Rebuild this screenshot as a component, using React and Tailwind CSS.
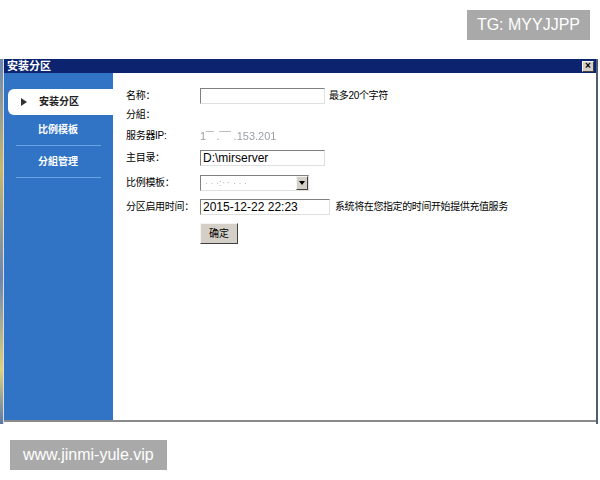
import React from "react";

const cjk = { fontFamily: '"Liberation Sans", "Noto Sans CJK SC", sans-serif' };

function Row({ label, top, children }) {
  return (
    <div className={`flex items-center h-[16px] ${top}`}>
      <div className="w-[74px] whitespace-nowrap text-[10px] tracking-[-0.3px] text-black leading-none">{label}</div>
      {children}
    </div>
  );
}

const sunken = "border border-[#7f7f7f] border-r-[#e0e0e0] border-b-[#e0e0e0]";
const raised = "bg-[#d4d0c8] border border-[#f4f4f4] border-r-[#404040] border-b-[#404040]";

export default function App() {
  return (
    <div className="relative w-[600px] h-[480px] bg-white overflow-hidden" style={cjk}>
      {/* watermarks */}
      <div className="absolute right-[10px] top-[10px] h-[30px] px-[10px] bg-[#a9a9a9] text-white text-[16px] leading-[30px]">
        TG: MYYJJPP
      </div>
      <div className="absolute left-[10px] top-[440px] h-[30px] px-[13px] bg-[#a9a9a9] text-white text-[16px] leading-[30px]">
        www.jinmi-yule.vip
      </div>

      {/* window */}
      <div className="pt-[59px] flex">
        <div className="w-[3px] h-[365px] bg-[linear-gradient(#6b87b5,#c9b86a_30%,#6e86ad_60%,#e0d27a_85%,#5a78a8)]" />
        <div className="w-[595px] border-r-2 border-r-[#4e5f74] border-l border-l-[#d8dde6]">
          <div className="h-[14px] bg-[#0c2470] flex items-center justify-between pl-[3px] pr-[2px]">
            <span className="text-white text-[11px] font-bold leading-none">安装分区</span>
            <span className={`w-[12px] h-[11px] ${raised} flex items-center justify-center text-[10px] font-bold leading-none text-black`}>
              ×
            </span>
          </div>
          <div className="flex h-[349px] border-b-2 border-b-[#8a8a8a]">
            {/* sidebar */}
            <div className="w-[109px] bg-[#3174c6] pt-[16px] flex flex-col">
              <div className="ml-[4px] h-[26px] bg-white rounded-l-[6px] flex items-center pl-[13px]">
                <svg width="6" height="8" viewBox="0 0 6 8">
                  <path d="M0 0 L6 4 L0 8 Z" fill="#333" />
                </svg>
                <span className="ml-[12px] text-[10px] font-bold text-[#222] leading-none">安装分区</span>
              </div>
              <div className="h-[30px] flex items-center pl-[34px] text-white text-[10px] font-bold leading-none">比例模板</div>
              <div className="mx-[12px] h-px bg-[#6aa3e6]" />
              <div className="h-[31px] flex items-center pl-[34px] text-white text-[10px] font-bold leading-none">分組管理</div>
              <div className="mx-[12px] h-px bg-[#6aa3e6]" />
            </div>

            {/* form */}
            <div className="flex-1 bg-white pl-[13px] pt-[15px]">
              <Row label="名称：" top="">
                <div className={`w-[125px] h-[16px] ${sunken}`} />
                <span className="ml-[4px] text-[10px] tracking-[-0.3px] leading-none">最多20个字符</span>
              </Row>
              <Row label="分組：" top="mt-[3px]" />
              <Row label="服务器IP:" top="mt-[5px]">
                <span className="text-[11px] text-[#9aa0a6] blur-[0.7px] leading-none">1‾‾ .‾‾‾ .153.201</span>
              </Row>
              <Row label="主目录：" top="mt-[6px]">
                <div className={`w-[125px] h-[16px] ${sunken} text-[12px] leading-[14px] pl-[2px]`}>
                  D:\mirserver
                </div>
              </Row>
              <Row label="比例模板：" top="mt-[9px]">
                <div className={`w-[109px] h-[16px] ${sunken} flex items-center`}>
                  <span className="flex-1 text-[9px] text-[#b0b4b8] blur-[0.6px] pl-[4px] leading-none">· ·  ·:‥ ·  · ·</span>
                  <span className={`w-[12px] h-[14px] ${raised} flex items-center justify-center`}>
                    <svg width="6" height="4" viewBox="0 0 6 4">
                      <path d="M0 0 L6 0 L3 4 Z" fill="#000" />
                    </svg>
                  </span>
                </div>
              </Row>
              <Row label="分区启用时间：" top="mt-[8px]">
                <div className={`w-[130px] h-[16px] ${sunken} text-[12px] leading-[14px] pl-[2px]`}>
                  2015-12-22 22:23
                </div>
                <span className="ml-[5px] text-[10px] tracking-[-0.4px] leading-none">系统将在您指定的时间开始提供充值服务</span>
              </Row>
              <div className={`mt-[8px] ml-[74px] w-[38px] h-[21px] ${raised} flex items-center justify-center text-[10px] leading-none`}>
                确定
              </div>
            </div>
          </div>
        </div>
      </div>
    </div>
  );
}
